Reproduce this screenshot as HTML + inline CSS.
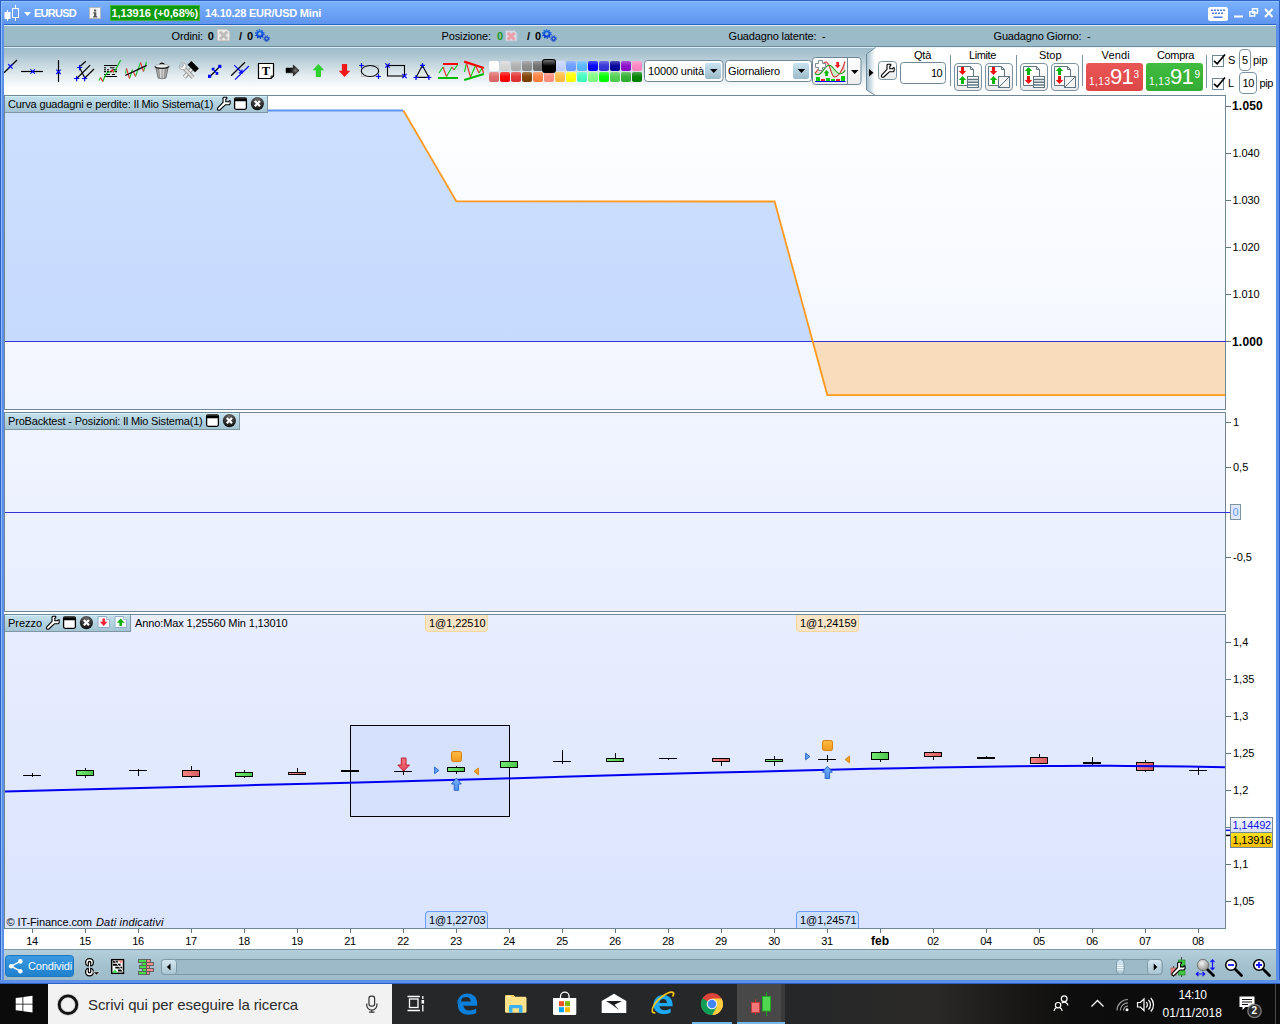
<!DOCTYPE html>
<html lang="it">
<head>
<meta charset="utf-8">
<title>EURUSD</title>
<style>
html,body{margin:0;padding:0;}
body{width:1280px;height:1024px;overflow:hidden;position:relative;background:#fff;font-family:"Liberation Sans",sans-serif;font-size:11px;color:#000;}
.abs{position:absolute;}
#win{position:absolute;left:0;top:0;width:1280px;height:984px;background:#5b8fea;}
#titlebar{position:absolute;left:0;top:0;width:1280px;height:25px;background:linear-gradient(#7ab2ff 0%,#72a8fa 30%,#5e93ec 100%);box-sizing:border-box;border:1px solid #2b62c4;border-bottom:none;}
#titlebar .hl{position:absolute;left:0;top:0;width:1278px;height:1px;background:#8ec0ff;}#titlebar .hl2{position:absolute;left:0;top:0;width:1px;height:24px;background:#8ec0ff;}
#bl{position:absolute;left:0;top:24px;width:4px;height:960px;background:#5b8fea;border-left:1px solid #2b62c4;box-sizing:border-box;}
#bl i{position:absolute;left:0;top:0;width:1px;height:958px;background:#8cbcfc;}
#br{position:absolute;left:1276px;top:24px;width:4px;height:960px;background:#5b8fea;border-right:1px solid #2b62c4;box-sizing:border-box;}
#bb{position:absolute;left:0;top:980px;width:1280px;height:4px;background:#5b8fea;border-bottom:1px solid #2b62c4;box-sizing:border-box;}
#tsep{position:absolute;left:4px;top:24px;width:1272px;height:1px;background:#2b62c4;}
#tsep2{position:absolute;left:4px;top:25px;width:1272px;height:1px;background:#d8eef6;}
#status{position:absolute;left:4px;top:26px;width:1272px;height:20px;background:#9cbbc8;}
#toolbar{position:absolute;left:4px;top:46px;width:1272px;height:49px;background:linear-gradient(#6f8a98 0,#6f8a98 1px,#d6eef8 1px,#d6eef8 2px,#9fbdca 2px,#a9c3cf 8px,#e4edf1 30px,#ffffff 44px);}
#main{position:absolute;left:4px;top:95px;width:1272px;height:854px;background:#fff;}
.panel{position:absolute;left:4px;width:1222px;box-sizing:border-box;border:1px solid #6f8796;}
#p1{top:95px;height:315px;background:linear-gradient(#ffffff,#f1f5ff);}
#p2{top:412px;height:200px;background:linear-gradient(#f1f5ff,#e8eefe);}
#p3{top:614px;height:315px;background:linear-gradient(#e8eefe,#dae4fe);}
.tab{position:absolute;height:17px;background:linear-gradient(#d2f0fa 0,#d2f0fa 1px,#c2e0ec 1px,#a4c4d3 100%);border-right:1px solid #7d97a5;border-bottom:1px solid #7d97a5;box-sizing:border-box;}
.ax{position:absolute;left:1233px;font-size:11px;line-height:12px;white-space:nowrap;}
.tick{position:absolute;left:1226px;width:4px;height:1px;background:#5f7582;}
#bbar{position:absolute;left:4px;top:949px;width:1272px;height:31px;background:linear-gradient(#7f99a6 0,#7f99a6 1px,#b4cfdb 1px,#a2c0ce 60%,#9dbbc9 100%);}
#task{position:absolute;left:0;top:984px;width:1280px;height:40px;background:linear-gradient(to right,#252628 0,#262729 62%,#2a2927 73%,#1a1917 79%,#0d0d0d 84%,#0b0b0b 100%);}

.t{position:absolute;white-space:nowrap;line-height:12px;font-size:11px;}
.b{font-weight:bold;}
.w{color:#fff;}
svg{position:absolute;overflow:visible;}
</style>
</head>
<body>
<div id="win"></div>
<div id="titlebar"><div class="hl"></div><div class="hl2"></div></div>
<div id="tsep"></div><div id="tsep2"></div>
<div id="status"></div>
<div id="toolbar"></div>

<!-- TITLE BAR -->
<svg id="ticon" style="left:0;top:0" width="120" height="25" viewBox="0 0 120 25">
 <rect x="4.5" y="12" width="6" height="7" fill="#fff"/><rect x="7" y="10" width="1" height="11" fill="#fff"/>
 <rect x="12.5" y="8.5" width="6" height="9" fill="none" stroke="#fff" stroke-width="1"/><rect x="15" y="5" width="1" height="3" fill="#fff"/><rect x="15" y="18" width="1" height="3" fill="#fff"/>
 <path d="M24 12h7l-3.5 4z" fill="#fff"/>
 <rect x="89.500" y="7.500" width="11" height="11" fill="#f4f4f4" stroke="#b0b8c0"/>
 <path d="M94 9.500h2.200v2h-2.200zM93.300 12.300h3v4h1v1.200h-4.200v-1.200h1v-2.800h-0.800z" fill="#555"/>
</svg>
<div class="t b w" style="left:34px;top:7px;letter-spacing:-0.74px;/*a*/--x1:76">EURUSD</div>
<div class="abs" style="left:110px;top:5px;width:90px;height:16px;background:#0d9a0d;border:1px solid #3fb53f;box-sizing:border-box"></div>
<div class="t b w" style="left:111.500px;top:7px;letter-spacing:-0.08px;/*a*/--x1:198">1,13916 (+0,68%)</div>
<div class="t b w" style="left:205px;top:7px;letter-spacing:-0.21px;/*a*/--x1:321">14.10.28 EUR/USD Mini</div>
<svg id="wctl" style="left:1200px;top:0" width="76" height="25" viewBox="0 0 76 25">
 <rect x="8" y="7" width="20" height="14" rx="2.500" fill="#fff"/>
 <g fill="#4a7fe0"><rect x="11" y="9.500" width="2" height="1.500"/><rect x="14" y="9.500" width="2" height="1.500"/><rect x="17" y="9.500" width="2" height="1.500"/><rect x="20" y="9.500" width="2" height="1.500"/><rect x="23" y="9.500" width="2" height="1.500"/>
 <rect x="12" y="12.500" width="2" height="1.500"/><rect x="15" y="12.500" width="2" height="1.500"/><rect x="18" y="12.500" width="2" height="1.500"/><rect x="21" y="12.500" width="2" height="1.500"/><rect x="13.500" y="16.500" width="9" height="1.500"/></g>
 <rect x="34" y="15.500" width="9" height="2" fill="#fff"/>
 <path d="M52.500 8.800h5v4.200h-5z M49.700 11.800h5v4.200h-5z" fill="none" stroke="#fff" stroke-width="1.400"/>
 <path d="M65 9l7.500 8M72.500 9l-7.500 8" stroke="#fff" stroke-width="2" fill="none"/>
</svg>
<!-- STATUS BAND -->
<div class="t" style="left:171.500px;top:30px;letter-spacing:-0.13px;/*a*/--x1:203">Ordini:</div>
<div class="t b" style="left:207.700px;top:30px">0</div>
<div class="t b" style="left:239px;top:30px">/</div><div class="t b" style="left:247px;top:30px">0</div>
<div class="t" style="left:441.500px;top:30px;letter-spacing:-0.13px;/*a*/--x1:491">Posizione:</div>
<div class="t b" style="left:497px;top:30px;color:#1a9a1a">0</div>
<div class="t b" style="left:527px;top:30px">/</div><div class="t b" style="left:535px;top:30px">0</div>
<div class="t" style="left:728.500px;top:30px;letter-spacing:-0.15px;/*a*/--x1:816.500">Guadagno latente:</div><div class="t" style="left:822px;top:30px">-</div>
<div class="t" style="left:993.500px;top:30px;letter-spacing:-0.16px;/*a*/--x1:1081.500">Guadagno Giorno:</div><div class="t" style="left:1087px;top:30px">-</div>
<svg id="sticons" style="left:0;top:26px" width="600" height="20" viewBox="0 26 600 20">
 <defs><linearGradient id="gearg" gradientUnits="userSpaceOnUse" x1="0" y1="28" x2="0" y2="43"><stop offset="0" stop-color="#2a86ec"/><stop offset=".5" stop-color="#0a44d8"/><stop offset="1" stop-color="#0630c0"/></linearGradient></defs>
 <g id="doc1"><path d="M217.500 29.500h9.500l2.500 2.500v8.500h-12z" fill="#ecebe8" stroke="#cfc8c4" stroke-width="1"/><path d="M220 31.800l7.300 7.300M227.300 31.800l-7.300 7.300" stroke="#bebebc" stroke-width="3"/></g>
 <g id="doc2"><path d="M505.500 30.500h9l2.500 2.500v8h-11.500z" fill="#d6dde6" stroke="#b4c4d6" stroke-width="1"/><path d="M507.800 32.800l6.800 6.800M514.600 32.800l-6.800 6.800" stroke="#eaa0aa" stroke-width="3.200"/></g>
 <g id="gear1" fill="none" stroke="url(#gearg)"><circle cx="259.8" cy="33.9" r="2.7" stroke-width="2.0"/><circle cx="259.8" cy="33.9" r="4.2" stroke-width="1.4" stroke-dasharray="1.319 1.319"/><circle cx="266.6" cy="38.6" r="1.7" stroke-width="1.3"/><circle cx="266.6" cy="38.6" r="2.8" stroke-width="1.0" stroke-dasharray="1.100 1.100"/></g>
 <g id="gear2" fill="none" stroke="url(#gearg)"><circle cx="546.8" cy="33.9" r="2.7" stroke-width="2.0"/><circle cx="546.8" cy="33.9" r="4.2" stroke-width="1.4" stroke-dasharray="1.319 1.319"/><circle cx="553.6" cy="38.6" r="1.7" stroke-width="1.3"/><circle cx="553.6" cy="38.6" r="2.8" stroke-width="1.0" stroke-dasharray="1.100 1.100"/></g>
</svg>

<!-- TOOLBAR -->
<svg id="tbsvg" style="left:0;top:46px" width="1280" height="50" viewBox="0 46 1280 50">
<defs>
<linearGradient id="gloss" x1="0" y1="0" x2="0" y2="1"><stop offset="0" stop-color="#fff" stop-opacity=".3"/><stop offset=".45" stop-color="#fff" stop-opacity=".04"/><stop offset="1" stop-color="#000" stop-opacity=".03"/></linearGradient>
<linearGradient id="gloss2" x1="0" y1="0" x2="0" y2="1"><stop offset="0" stop-color="#fff" stop-opacity=".45"/><stop offset="1" stop-color="#fff" stop-opacity="0"/></linearGradient>
<linearGradient id="btng" x1="0" y1="0" x2="0" y2="1"><stop offset="0" stop-color="#ffffff"/><stop offset="1" stop-color="#ececec"/></linearGradient>
<linearGradient id="ddg" x1="0" y1="0" x2="0" y2="1"><stop offset="0" stop-color="#c9e2f0"/><stop offset="1" stop-color="#9bbac9"/></linearGradient>
<linearGradient id="rsec" x1="0" y1="0" x2="1" y2="0"><stop offset="0" stop-color="#9bbac9"/><stop offset="1" stop-color="#ffffff"/></linearGradient>
<linearGradient id="redg" x1="0" y1="0" x2="0" y2="1"><stop offset="0" stop-color="#ea5656"/><stop offset="1" stop-color="#dc4646"/></linearGradient>
<linearGradient id="grng" x1="0" y1="0" x2="0" y2="1"><stop offset="0" stop-color="#40bc40"/><stop offset="1" stop-color="#32ac32"/></linearGradient>
<linearGradient id="trashg" x1="0" y1="0" x2="1" y2="0"><stop offset="0" stop-color="#8a8a8a"/><stop offset=".45" stop-color="#e8e8e8"/><stop offset="1" stop-color="#8a8a8a"/></linearGradient>
<radialGradient id="arrg" gradientUnits="userSpaceOnUse" cx="295.500" cy="70.500" r="7"><stop offset="0" stop-color="#7a7a7a"/><stop offset=".55" stop-color="#222"/><stop offset="1" stop-color="#000"/></radialGradient>
</defs>
<!-- right white section -->
<path d="M875 47.500L1276 47.500V95H875L866.500 90V54Z" fill="#fff"/>
<path d="M875 48L867 54V90L875 95Z" fill="url(#rsec)"/>
<rect x="866" y="54" width="9" height="36" fill="url(#rsec)"/>
<path d="M875.500 47.500L866.500 54V90L875.500 95.500" fill="none" stroke="#6f8a98" stroke-width="1"/>
<path d="M869 69l4.500 3.800L869 76.500z" fill="#000"/>
<!-- drawing icons -->
<g id="ic1"><path d="M4 72.700L17 60" stroke="#000" stroke-width="1.200"/><path d="M8.200 64.200l4.400 4.400M12.600 64.200l-4.400 4.400" stroke="#00f" stroke-width="1.200"/></g>
<g id="ic2"><path d="M21 71.500H43" stroke="#000" stroke-width="1.200"/><path d="M30.500 69.300l4.400 4.400M34.900 69.300l-4.400 4.400" stroke="#00f" stroke-width="1.200"/></g>
<g id="ic3"><path d="M58.500 60V82" stroke="#000" stroke-width="1.200"/><path d="M56.300 69.600l4.400 4.400M60.700 69.600l-4.400 4.400" stroke="#00f" stroke-width="1.200"/></g>
<g id="ic4" stroke="#000" stroke-width="1.200"><path d="M80.200 66.300L85.800 61.300M77.300 78L90.200 65.100M84.900 78L94 69M79.600 67.800L84.900 78"/><path d="M77 67.500h5.200M79.600 65v5.200M74 78.500h5.200M76.600 76v5.200M82 78.500h5.200M84.600 76v5.200" stroke="#00f"/></g>
<g id="ic5"><path d="M104 65.500h13M104 76.500h13" stroke="#000" stroke-width="1.200"/><path d="M104 67.700h2M110 67.700h4.500M104 69.700h2M107 69.700h2M112.500 69.700h4.500M104 71.600h2M107 71.600h2M110 71.600h2M115 71.600h2M104 74.500h6M112 74.500h3" stroke="#000" stroke-width="1.100"/><path d="M99 80.500l1.500-3M102.800 81.500l2.200-5.500 2-3 3.500-1.500M113.500 72.500l3-4.500 4.200-8" stroke="#10c020" stroke-width="1.200" fill="none"/><path d="M100.500 77.500l2.300 4M110.500 71.500l2-1.500 1 2.500" stroke="#f01818" stroke-width="1.200" fill="none"/></g>
<g id="ic6" fill="none" stroke-width="1.100"><path d="M125.500 73.500l1-5M129.500 78.500l3-9M135.500 76.500l5-14M143.500 71.500l3-9.500" stroke="#20c030"/><path d="M126.500 68.500l3 10M133.500 72l2 4.500M140.500 62.500l3 9" stroke="#f03030"/><path d="M125.300 75.500L146.700 65.300" stroke="#000" stroke-width="1.300"/></g>
<g id="ic7"><path d="M156 68l2 10q4 1.600 8 0l2-10z" fill="url(#trashg)" stroke="#6a6a6a" stroke-width=".8"/><path d="M158.600 69l.9 9M162 69.300v9.300M165.400 69l-.9 9" stroke="#8a8a8a" stroke-width="1"/><path d="M159.500 64.800q2.500-3.200 5 0" fill="none" stroke="#000" stroke-width="1.500"/><ellipse cx="162" cy="66.300" rx="7" ry="2" fill="#ececec"/><path d="M155 66.300a7 2 0 0 0 14 0" fill="none" stroke="#1a1a1a" stroke-width="1.300"/><path d="M155 66.300a7 2 0 0 1 14 0" fill="none" stroke="#999" stroke-width=".6"/></g>
<g id="ic8"><path d="M184.300 77.300l8-9" stroke="#8c8c8c" stroke-width="4" stroke-linecap="butt"/><path d="M184.300 77.300l8-9" stroke="#f2f2f2" stroke-width="2.400"/><rect x="-5.300" y="-2.700" width="10.600" height="5.400" fill="#000" transform="translate(193.200,66.600) rotate(45)"/><path d="M184.500 68.500l8.500 9" stroke="#8c8c8c" stroke-width="4"/><path d="M184.500 68.500l8.500 9" stroke="#dedede" stroke-width="2.400"/><circle cx="182.800" cy="66.300" r="3.500" fill="#f6f6f6" stroke="#9a9a9a" stroke-width=".8"/><path d="M179 62l3.500 1.300 1.200 2.300-1.700 1.700-2.300-1.200z" fill="#b8ccd7"/><path d="M182.300 63.500a1.900 1.900 0 1 1-2.500 2.600" fill="none" stroke="#9a9a9a" stroke-width=".7"/></g>
<g id="ic9"><path d="M210.500 76L219.800 66.500" stroke="#000" stroke-width="1.200"/><rect x="208" y="74.700" width="3.200" height="3.200" fill="#00f"/><rect x="218.200" y="64.800" width="3.200" height="3.200" fill="#00f"/><path d="M212.500 68.500l5 5.500M212.300 70.500v-2.200h2.200M217.700 72v2.200h-2.200" stroke="#00f" stroke-width="1.200" fill="none"/></g>
<g id="ic10" fill="none"><path d="M231.100 75.700L245 62.200" stroke="#000" stroke-width="1.200"/><path d="M235 79.600L249 66" stroke="#00f" stroke-width="1.200"/><path d="M234.200 65.100L242 72.700M242 69.500v3.300h-3.300" stroke="#00f" stroke-width="1.200"/></g>
<g id="ic11"><path d="M258.500 63.500h15v12.500l-2.500 2.500h-12.500z" fill="#fff" stroke="#000" stroke-width="1.200"/><path d="M273.500 76h-2.500v2.500" fill="none" stroke="#000" stroke-width=".8"/></g>
<g id="ic12"><path d="M286 68h7.300v-3l5.800 5.500-5.800 5.500v-3.200H286z" fill="url(#arrg)" stroke="#000" stroke-width=".5"/></g>
<g id="ic13"><path d="M318.400 64l5.800 6.300h-3.200v6.700h-5.200v-6.700h-3.200z" fill="#2fd02f"/></g>
<g id="ic14"><path d="M341.900 64h5.200v6.700h3.200l-5.800 6.300-5.800-6.300h3.200z" fill="#f01818"/></g>
<g id="ic15" fill="none"><rect x="361.500" y="65.500" width="17" height="11" stroke="#aaa" stroke-width=".6"/><ellipse cx="370" cy="71" rx="8.700" ry="5.500" stroke="#000" stroke-width="1.100"/><path d="M359 65.500h5M361.500 63v5M376 76.500h5M378.500 74v5" stroke="#00f" stroke-width="1.200"/></g>
<g id="ic16" fill="none"><rect x="387.500" y="65.500" width="17" height="10.500" stroke="#000" stroke-width="1.100"/><path d="M385.300 63.300l4.400 4.400M389.700 63.300l-4.400 4.400M402.300 73.800l4.400 4.400M406.700 73.800l-4.400 4.400" stroke="#00f" stroke-width="1.200"/></g>
<g id="ic17" fill="none"><path d="M422.400 65.400L416 77.400H428.900Z" stroke="#000" stroke-width="1.100"/><path d="M420 65.400h5M422.500 63v5M413.500 77.500h5M416 75v5M426.400 77.500h5M428.900 75v5" stroke="#00f" stroke-width="1.200"/></g>
<g id="ic18" fill="none"><path d="M443 64h15" stroke="#f00" stroke-width="2"/><path d="M438 78h20" stroke="#0b0" stroke-width="2"/><path d="M439 73l4-6M446.500 76.500l5.500-9.500M454 70l3.500-5" stroke="#0c0" stroke-width="1.100"/><path d="M443 67l3.500 9.500M452 67l2 3" stroke="#f22" stroke-width="1.100"/></g>
<g id="ic19" fill="none"><path d="M464.200 61.600L483.900 68" stroke="#f00" stroke-width="2.200"/><path d="M464.200 80L483.900 74" stroke="#0b0" stroke-width="2.200"/><path d="M464.500 72l2-9M470.500 77l5-11.500M479 73l3-5" stroke="#0c0" stroke-width="1.100"/><path d="M466.500 63l4 14M475.500 65.500l3.500 7.500M482 68l1.500 5" stroke="#f22" stroke-width="1.100"/></g>
<!-- swatches -->
<rect x="489" y="61" width="10" height="10" rx="2" fill="#ffffff"/><rect x="500" y="61" width="10" height="10" rx="2" fill="#d6d6d6"/><rect x="511" y="61" width="10" height="10" rx="2" fill="#b0b0b0"/><rect x="522" y="61" width="10" height="10" rx="2" fill="#8c8c8c"/><rect x="533" y="61" width="10" height="10" rx="2" fill="#6e6e6e"/><rect x="555" y="61" width="10" height="10" rx="2" fill="#c3d1ff"/><rect x="566" y="61" width="10" height="10" rx="2" fill="#6a9cff"/><rect x="577" y="61" width="10" height="10" rx="2" fill="#58b8ff"/><rect x="588" y="61" width="10" height="10" rx="2" fill="#0000ff"/><rect x="599" y="61" width="10" height="10" rx="2" fill="#3333d6"/><rect x="610" y="61" width="10" height="10" rx="2" fill="#000099"/><rect x="621" y="61" width="10" height="10" rx="2" fill="#8a0ac8"/><rect x="632" y="61" width="10" height="10" rx="2" fill="#ff84c2"/><rect x="489" y="72" width="10" height="10" rx="2" fill="#e06868"/><rect x="500" y="72" width="10" height="10" rx="2" fill="#ff0000"/><rect x="511" y="72" width="10" height="10" rx="2" fill="#e23232"/><rect x="522" y="72" width="10" height="10" rx="2" fill="#804000"/><rect x="533" y="72" width="10" height="10" rx="2" fill="#ff8040"/><rect x="544" y="72" width="10" height="10" rx="2" fill="#ff9080"/><rect x="555" y="72" width="10" height="10" rx="2" fill="#ffbe40"/><rect x="566" y="72" width="10" height="10" rx="2" fill="#ffff00"/><rect x="577" y="72" width="10" height="10" rx="2" fill="#40ffc0"/><rect x="588" y="72" width="10" height="10" rx="2" fill="#80ff80"/><rect x="599" y="72" width="10" height="10" rx="2" fill="#00ff00"/><rect x="610" y="72" width="10" height="10" rx="2" fill="#50d050"/><rect x="621" y="72" width="10" height="10" rx="2" fill="#30b030"/><rect x="632" y="72" width="10" height="10" rx="2" fill="#008000"/><g fill="url(#gloss)"><rect x="489" y="61" width="10" height="10" rx="2"/><rect x="489" y="72" width="10" height="10" rx="2"/><rect x="500" y="61" width="10" height="10" rx="2"/><rect x="500" y="72" width="10" height="10" rx="2"/><rect x="511" y="61" width="10" height="10" rx="2"/><rect x="511" y="72" width="10" height="10" rx="2"/><rect x="522" y="61" width="10" height="10" rx="2"/><rect x="522" y="72" width="10" height="10" rx="2"/><rect x="533" y="61" width="10" height="10" rx="2"/><rect x="533" y="72" width="10" height="10" rx="2"/><rect x="544" y="72" width="10" height="10" rx="2"/><rect x="555" y="61" width="10" height="10" rx="2"/><rect x="555" y="72" width="10" height="10" rx="2"/><rect x="566" y="61" width="10" height="10" rx="2"/><rect x="566" y="72" width="10" height="10" rx="2"/><rect x="577" y="61" width="10" height="10" rx="2"/><rect x="577" y="72" width="10" height="10" rx="2"/><rect x="588" y="61" width="10" height="10" rx="2"/><rect x="588" y="72" width="10" height="10" rx="2"/><rect x="599" y="61" width="10" height="10" rx="2"/><rect x="599" y="72" width="10" height="10" rx="2"/><rect x="610" y="61" width="10" height="10" rx="2"/><rect x="610" y="72" width="10" height="10" rx="2"/><rect x="621" y="61" width="10" height="10" rx="2"/><rect x="621" y="72" width="10" height="10" rx="2"/><rect x="632" y="61" width="10" height="10" rx="2"/><rect x="632" y="72" width="10" height="10" rx="2"/></g><rect x="542" y="59" width="14" height="14" rx="3" fill="#000"/><rect x="543" y="60" width="12" height="6" rx="2" fill="url(#gloss2)"/>
<!-- combos -->
<rect x="644.500" y="60.500" width="78.500" height="21" rx="3" fill="#fff" stroke="#6f8796"/>
<rect x="705" y="63" width="16" height="16" rx="2" fill="url(#ddg)"/>
<path d="M710 69h7.500l-3.750 4z" fill="#000"/>
<rect x="725.500" y="60.500" width="86" height="21" rx="3" fill="#fff" stroke="#6f8796"/>
<rect x="793" y="63" width="16" height="16" rx="2" fill="url(#ddg)"/>
<path d="M797.700 69h7.500l-3.750 4z" fill="#000"/>
<!-- indicator button -->
<rect x="812.500" y="57.500" width="48.500" height="27" rx="3" fill="url(#btng)" stroke="#6f8796"/>
<path d="M847.500 58v26" stroke="#6f8796"/>
<path d="M851 70h7.500l-3.750 4z" fill="#000"/>
<g id="indic"><path d="M815 73C818 71 822 62 826 62C830 62 831 77 834.500 77C838 77 843 70 845 61.500L845 70C844.500 71.500 842.500 73.800 840 73.800C836 73.800 833 65.200 829.500 65.200C826 65.200 824 70 821 73C819 75 817 75.500 815 73.500Z" fill="#f8c4c4" fill-opacity=".7" fill-rule="evenodd"/><path d="M827.500 65.500C831 65 834 71 837.500 72.500C836 76 835.500 77 834.500 77C831.500 77 830.500 68 827.500 65.500Z" fill="#c4f0c4"/><path d="M815 73C818 71 822 62 826 62C830 62 831 77 834.500 77C838 77 843 70 845 61.500" fill="none" stroke="#cc3030" stroke-width="1.100"/><path d="M815 73.500C817 75.500 819 75 821 73C824 70 826 65.200 829.500 65.200C833 65.200 836 73.800 840 73.800C842.500 73.800 844.500 71.500 845 70" fill="none" stroke="#18a018" stroke-width="1.100"/><path d="M815.500 63.500h3v-3h4v3h3v4h-3v3h-4v-3h-3z" fill="#fff" stroke="#7c8e9a" stroke-width="1"/><path d="M826.500 70l-2.800 3.200h1.500v2.700h2.600v-2.700h1.500z" fill="#0b0"/><path d="M836.300 62h2.700v3h1.500l-2.850 3.200l-2.850-3.200h1.500z" fill="#f02020"/><rect x="816" y="77" width="4" height="4" fill="#0c0"/><rect x="821" y="79" width="4" height="2" fill="#e22"/><rect x="826" y="78" width="4" height="3" fill="#0c0"/><rect x="831" y="79" width="4" height="2" fill="#0c0"/><rect x="836" y="79" width="4" height="2" fill="#e22"/><rect x="841" y="76" width="4" height="5" fill="#0c0"/><path d="M815 81.500h30.500" stroke="#00f" stroke-width="1"/></g>
<!-- wrench btn -->
<rect x="878.500" y="61.500" width="18" height="18" rx="3" fill="url(#btng)" stroke="#7c94a2"/>
<path id="wr" transform="translate(881,64)" d="M.8 10.800L6 5.400V1L7 .300H9.800V1.500L8.800 2.200V4.800H11.600L12.200 3.800H13.200V6.600L12.200 7.800H8.400L2.800 13Q1.400 13.600 .6 12.600Q0 11.600 .8 10.800Z" fill="#fff" stroke="#000" stroke-width="1.100" stroke-linejoin="round"/>
<!-- qty -->
<rect x="900.500" y="62.500" width="45" height="21" rx="3" fill="#fff" stroke="#6f8796"/>
<path d="M950.500 55v31M1016.500 55v31M1082.500 55v31M1206.500 55v33" stroke="#7c94a2"/>
<!-- order buttons -->
<g id="ob">
<rect x="954.500" y="63.500" width="27" height="27" rx="3.500" fill="url(#btng)" stroke="#7c94a2"/>
<rect x="985.500" y="63.500" width="27" height="27" rx="3.500" fill="url(#btng)" stroke="#7c94a2"/>
<rect x="1020.500" y="63.500" width="27" height="27" rx="3.500" fill="url(#btng)" stroke="#7c94a2"/>
<rect x="1051.500" y="63.500" width="27" height="27" rx="3.500" fill="url(#btng)" stroke="#7c94a2"/>
<g transform="translate(0,0)"><path d="M957.500 66.500h13l3 3v16h-16z" fill="#fff" stroke="#5f7582" stroke-width="1"/><path d="M970.500 66.500v3h3" fill="none" stroke="#5f7582" stroke-width="1"/><path d="M961 67h3v4h2.200l-3.700 4-3.700-4h2.200z" fill="#f01010"/><path d="M962.500 76l3.700 4h-2.200v4h-3v-4h-2.200z" fill="#0ab40a"/><rect x="967.500" y="76.500" width="11" height="11" fill="#fff" stroke="#5f7582" stroke-width="1"/><path d="M968 79.500h10M968 82.200h10M968 85h10" stroke="#5f7582" stroke-width="1.400"/></g><g transform="translate(31,0)"><path d="M957.500 66.500h13l3 3v16h-16z" fill="#fff" stroke="#5f7582" stroke-width="1"/><path d="M970.500 66.500v3h3" fill="none" stroke="#5f7582" stroke-width="1"/><path d="M961 67h3v4h2.200l-3.700 4-3.700-4h2.200z" fill="#f01010"/><path d="M962.500 76l3.700 4h-2.200v4h-3v-4h-2.200z" fill="#0ab40a"/><rect x="967.500" y="76.500" width="11" height="11" fill="#f4f4f4" stroke="#5f7582" stroke-width="1"/><path d="M968 87l10-10" stroke="#5f7582" stroke-width="1"/></g><g transform="translate(66,0)"><path d="M957.500 66.500h13l3 3v16h-16z" fill="#fff" stroke="#5f7582" stroke-width="1"/><path d="M970.500 66.500v3h3" fill="none" stroke="#5f7582" stroke-width="1"/><path d="M962.500 67l3.700 4h-2.200v4h-3v-4h-2.200z" fill="#0ab40a"/><path d="M961 76h3v4h2.200l-3.700 4-3.700-4h2.200z" fill="#f01010"/><rect x="967.500" y="76.500" width="11" height="11" fill="#fff" stroke="#5f7582" stroke-width="1"/><path d="M968 79.500h10M968 82.200h10M968 85h10" stroke="#5f7582" stroke-width="1.400"/></g><g transform="translate(97,0)"><path d="M957.500 66.500h13l3 3v16h-16z" fill="#fff" stroke="#5f7582" stroke-width="1"/><path d="M970.500 66.500v3h3" fill="none" stroke="#5f7582" stroke-width="1"/><path d="M962.500 67l3.700 4h-2.200v4h-3v-4h-2.200z" fill="#0ab40a"/><path d="M961 76h3v4h2.200l-3.700 4-3.700-4h2.200z" fill="#f01010"/><rect x="967.500" y="76.500" width="11" height="11" fill="#f4f4f4" stroke="#5f7582" stroke-width="1"/><path d="M968 87l10-10" stroke="#5f7582" stroke-width="1"/></g></g>
<!-- sell / buy -->
<rect x="1086" y="63" width="57" height="28" rx="3" fill="url(#redg)"/>
<rect x="1146" y="63" width="57" height="28" rx="3" fill="url(#grng)"/>
<!-- checkboxes -->
<rect x="1212.500" y="55.500" width="11" height="11" fill="#fff" stroke="#6f8796"/>
<rect x="1212.500" y="78.500" width="11" height="11" fill="#fff" stroke="#6f8796"/>
<path d="M1214 60.800l3.200 3L1225 54.500" fill="none" stroke="#000" stroke-width="1.700"/>
<path d="M1214 83.800l3.200 3L1225 77.500" fill="none" stroke="#000" stroke-width="1.700"/>
<rect x="1239.500" y="49.500" width="11" height="21" rx="3.500" fill="#fff" stroke="#7c94a2"/>
<rect x="1239.500" y="72.500" width="17" height="21" rx="3.500" fill="#fff" stroke="#7c94a2"/>
</svg>
<div class="t" style="left:261.800px;top:63.600px;font-family:'Liberation Serif',serif;font-weight:bold;font-size:12.500px;line-height:14px;">T</div>
<div class="t" style="left:648px;top:65px;letter-spacing:-0.14px;/*a*/--x1:704">10000 unità</div>
<div class="t" style="left:728px;top:65px;letter-spacing:-0.16px;/*a*/--x1:780">Giornaliero</div>
<div class="t" style="left:914px;top:49px;letter-spacing:-0.24px;/*a*/--x1:931">Qtà</div>
<div class="t" style="left:931px;top:67px;letter-spacing:-0.62px;/*a*/--x1:942">10</div>
<div class="t" style="left:969px;top:49px;letter-spacing:-0.39px;/*a*/--x1:996">Limite</div>
<div class="t" style="left:1039px;top:49px;letter-spacing:-0.04px;/*a*/--x1:1061.500">Stop</div>
<div class="t" style="left:1101.500px;top:49px;letter-spacing:0.19px;/*a*/--x1:1130">Vendi</div>
<div class="t" style="left:1157px;top:49px;letter-spacing:-0.35px;/*a*/--x1:1194">Compra</div>
<div class="t w" style="left:1089px;top:75.500px;font-size:10px;letter-spacing:0.51px;/*a*/--x1:1110.500">1,13</div>
<div class="t w" style="left:1110px;top:65px;font-size:22px;line-height:24px;letter-spacing:-0.74px;/*a*/--x1:1133">91</div>
<div class="t w" style="left:1133.500px;top:68.500px;font-size:10px;letter-spacing:0.94px;/*a*/--x1:1140">3</div>
<div class="t w" style="left:1149px;top:75.500px;font-size:10px;letter-spacing:0.51px;/*a*/--x1:1170.500">1,13</div>
<div class="t w" style="left:1170px;top:65px;font-size:22px;line-height:24px;letter-spacing:-0.74px;/*a*/--x1:1193">91</div>
<div class="t w" style="left:1194.500px;top:68.500px;font-size:10px;letter-spacing:0.94px;/*a*/--x1:1201">9</div>
<div class="t" style="left:1228px;top:54px;letter-spacing:-0.34px;/*a*/--x1:1235">S</div>
<div class="t" style="left:1242px;top:54px;letter-spacing:0.38px;/*a*/--x1:1248.500">5</div>
<div class="t" style="left:1253px;top:54px;letter-spacing:-0.06px;/*a*/--x1:1267.500">pip</div>
<div class="t" style="left:1228px;top:77px;letter-spacing:-0.12px;/*a*/--x1:1234">L</div>
<div class="t" style="left:1242.500px;top:77px;letter-spacing:-0.38px;/*a*/--x1:1254">10</div>
<div class="t" style="left:1259.500px;top:77px;letter-spacing:-0.40px;/*a*/--x1:1273">pip</div>
<div id="main"></div>
<div id="p1" class="panel"></div>
<div id="p2" class="panel"></div>
<div id="p3" class="panel"></div>

<!-- CHARTS -->
<svg id="charts" style="left:0;top:95px" width="1280" height="855" viewBox="0 95 1280 855">
<defs>
<linearGradient id="axb" x1="0" y1="0" x2="0" y2="1"><stop offset="0" stop-color="#f6f9ff"/><stop offset="1" stop-color="#d6def2"/></linearGradient><linearGradient id="axy" x1="0" y1="0" x2="0" y2="1"><stop offset="0" stop-color="#ffe21c"/><stop offset="1" stop-color="#f6bc00"/></linearGradient><linearGradient id="cg" x1="0" y1="0" x2="1" y2="0"><stop offset="0" stop-color="#74ec74"/><stop offset="1" stop-color="#4cc44c"/></linearGradient>
<linearGradient id="cr" x1="0" y1="0" x2="1" y2="0"><stop offset="0" stop-color="#f48686"/><stop offset="1" stop-color="#d65c5c"/></linearGradient>
<linearGradient id="og" x1="0" y1="0" x2="0" y2="1"><stop offset="0" stop-color="#fcbc44"/><stop offset="1" stop-color="#f09a1c"/></linearGradient>
<linearGradient id="bg" x1="0" y1="0" x2="0" y2="1"><stop offset="0" stop-color="#78b2fa"/><stop offset="1" stop-color="#4a8cec"/></linearGradient>
<linearGradient id="rg" x1="0" y1="0" x2="0" y2="1"><stop offset="0" stop-color="#f47882"/><stop offset="1" stop-color="#e44858"/></linearGradient>
<radialGradient id="clg" cx=".5" cy=".2" r=".8"><stop offset="0" stop-color="#6a6a6a"/><stop offset="1" stop-color="#0c0c0c"/></radialGradient>
<linearGradient id="wing" x1="0" y1="0" x2="0" y2="1"><stop offset="0" stop-color="#555"/><stop offset=".5" stop-color="#000"/><stop offset="1" stop-color="#000"/></linearGradient>
<g id="iw"><path d="M.8 10.800L6 5.400V1L7 .300H9.800V1.500L8.800 2.200V4.800H11.600L12.200 3.800H13.200V6.600L12.200 7.800H8.400L2.800 13Q1.400 13.600 .6 12.600Q0 11.600 .8 10.800Z" fill="#fff" stroke="#000" stroke-width="1.100" stroke-linejoin="round"/></g>
<g id="iwin"><rect x=".6" y=".6" width="11.800" height="11.400" rx="1.500" fill="#fff" stroke="#000" stroke-width="1.300"/><path d="M.2 4V2.100A1.900 1.900 0 0 1 2.100.2h8.800a1.900 1.900 0 0 1 1.900 1.900v1.900z" fill="url(#wing)"/></g>
<g id="icl"><circle cx="6.600" cy="6.600" r="6.600" fill="url(#clg)"/><path d="M4 4l5.200 5.200M9.200 4l-5.200 5.200" stroke="#fff" stroke-width="2.200"/></g>
<g id="idoc"><path d="M.5.500h8.500l3 3v8h-11.500z" fill="#f6f9fd" stroke="#94accc" stroke-width="1"/><path d="M9 .5v3h3" fill="#fff" stroke="#94accc" stroke-width=".8"/></g>
</defs>
<!-- panel 1 -->
<path d="M5 110.500H403.400L456.400 201.400L774.600 201.500L812.600 341H5Z" fill="#3a82fb" fill-opacity=".25"/>
<path d="M812.600 341.500H1225V395.100H827.300Z" fill="#f8dcbc"/>
<rect x="5" y="341" width="1221" height="1" fill="#3232d8"/>
<path d="M5 110.500H403.400" fill="none" stroke="#5f95f2" stroke-width="1.800"/>
<path d="M403.400 110.500L456.400 201.400L774.600 201.500L827.300 395.100H1225" fill="none" stroke="#ff9a1e" stroke-width="1.800" stroke-linejoin="miter"/>
<!-- panel 2 -->
<rect x="5" y="512" width="1225" height="1" fill="#3232d8"/>
<!-- panel 3 -->
<rect x="350.500" y="725.500" width="159" height="91" fill="#d6e1fe" stroke="#000" stroke-width="1"/>
<rect x="23" y="775" width="18" height="1" fill="#000"/><rect x="32" y="773" width="1" height="4" fill="#000"/><rect x="85" y="768" width="1" height="10" fill="#000"/><rect x="76.5" y="770.5" width="17" height="5" fill="url(#cg)" stroke="#000" stroke-width="1"/><rect x="129" y="770" width="18" height="1" fill="#000"/><rect x="138" y="769" width="1" height="7" fill="#000"/><rect x="191" y="766" width="1" height="12" fill="#000"/><rect x="182.5" y="770.5" width="17" height="6" fill="url(#cr)" stroke="#000" stroke-width="1"/><rect x="244" y="770" width="1" height="8" fill="#000"/><rect x="235.5" y="772.5" width="17" height="4" fill="url(#cg)" stroke="#000" stroke-width="1"/><rect x="297" y="768" width="1" height="7" fill="#000"/><rect x="288.5" y="772.5" width="17" height="2" fill="url(#cr)" stroke="#000" stroke-width="1"/><rect x="341" y="770" width="18" height="2" fill="#000"/><rect x="394" y="771" width="18" height="1" fill="#000"/><rect x="403" y="766" width="1" height="9" fill="#000"/><rect x="456" y="766" width="1" height="8" fill="#000"/><rect x="447.5" y="767.5" width="17" height="4" fill="url(#cg)" stroke="#000" stroke-width="1"/><rect x="500.5" y="761.5" width="17" height="6" fill="url(#cg)" stroke="#000" stroke-width="1"/><rect x="553" y="761" width="18" height="1" fill="#000"/><rect x="562" y="750" width="1" height="14" fill="#000"/><rect x="615" y="753" width="1" height="9" fill="#000"/><rect x="606.5" y="758.5" width="17" height="3" fill="url(#cg)" stroke="#000" stroke-width="1"/><rect x="659" y="758" width="18" height="1" fill="#000"/><rect x="668" y="758" width="1" height="2" fill="#000"/><rect x="721" y="758" width="1" height="8" fill="#000"/><rect x="712.5" y="758.5" width="17" height="3" fill="url(#cr)" stroke="#000" stroke-width="1"/><rect x="774" y="756" width="1" height="10" fill="#000"/><rect x="765.5" y="759.5" width="17" height="2" fill="url(#cg)" stroke="#000" stroke-width="1"/><rect x="818" y="759" width="18" height="1" fill="#000"/><rect x="827" y="755" width="1" height="7" fill="#000"/><rect x="880" y="751" width="1" height="11" fill="#000"/><rect x="871.5" y="752.5" width="17" height="7" fill="url(#cg)" stroke="#000" stroke-width="1"/><rect x="933" y="751" width="1" height="9" fill="#000"/><rect x="924.5" y="752.5" width="17" height="4" fill="url(#cr)" stroke="#000" stroke-width="1"/><rect x="977" y="757" width="18" height="2" fill="#000"/><rect x="986" y="756" width="1" height="3" fill="#000"/><rect x="1039" y="754" width="1" height="9" fill="#000"/><rect x="1030.5" y="757.5" width="17" height="6" fill="url(#cr)" stroke="#000" stroke-width="1"/><rect x="1083" y="762" width="18" height="2" fill="#000"/><rect x="1092" y="757" width="1" height="9" fill="#000"/><rect x="1145" y="760" width="1" height="12" fill="#000"/><rect x="1136.5" y="762.5" width="17" height="8" fill="url(#cr)" stroke="#000" stroke-width="1"/><rect x="1189" y="770" width="18" height="1" fill="#000"/><rect x="1198" y="767" width="1" height="8" fill="#000"/>
<path d="M5 791.6C32.5 790.87 114.2 788.63 170 787.2C225.8 785.77 285.8 784.40 340 783C394.2 781.60 445.0 780.20 495 778.8C545.0 777.40 589.2 775.98 640 774.6C690.8 773.22 756.7 771.57 800 770.5C843.3 769.43 866.7 768.87 900 768.2C933.3 767.53 973.3 766.88 1000 766.5C1026.7 766.12 1041.7 766.02 1060 765.9C1078.3 765.78 1093.3 765.75 1110 765.8C1126.7 765.85 1140.8 765.97 1160 766.2C1179.2 766.43 1214.2 767.03 1225 767.2" fill="none" stroke="#0000f0" stroke-width="2"/>
<path d="M401.300 758h4.700v7h3.500l-5.850 6.200l-5.850-6.200h3.500z" fill="url(#rg)" stroke="#c02030" stroke-width="1" stroke-linejoin="miter"/>
<rect x="451.5" y="751.5" width="10" height="10" rx="1.800" fill="url(#og)" stroke="#d8800c" stroke-width="1"/><path d="M434.6 767.1l4.300 3.300l-4.300 3.300z" fill="#62a2f6" stroke="#2c68d0" stroke-width="1" stroke-linejoin="round"/><path d="M478.4 768.1l-4.300 3.300l4.300 3.300z" fill="#f8a828" stroke="#d8800c" stroke-width="1" stroke-linejoin="round"/><path d="M456.4 778.1999999999999l4.900 5.800h-2.700v6.300h-4.400v-6.300h-2.700z" fill="url(#bg)" stroke="#2c68d0" stroke-width="1" stroke-linejoin="miter"/>
<rect x="822.5" y="740.5" width="10" height="10" rx="1.800" fill="url(#og)" stroke="#d8800c" stroke-width="1"/><path d="M805.6 753.2l4.300 3.300l-4.300 3.300z" fill="#62a2f6" stroke="#2c68d0" stroke-width="1" stroke-linejoin="round"/><path d="M849.4 756.2l-4.300 3.300l4.300 3.300z" fill="#f8a828" stroke="#d8800c" stroke-width="1" stroke-linejoin="round"/><path d="M827.4 766.4l4.900 5.800h-2.700v6.300h-4.400v-6.300h-2.700z" fill="url(#bg)" stroke="#2c68d0" stroke-width="1" stroke-linejoin="miter"/>
<!-- redraw ma partially over? no -->
<rect x="32" y="929" width="1" height="4" fill="#5f7582"/><rect x="85" y="929" width="1" height="4" fill="#5f7582"/><rect x="138" y="929" width="1" height="4" fill="#5f7582"/><rect x="191" y="929" width="1" height="4" fill="#5f7582"/><rect x="244" y="929" width="1" height="4" fill="#5f7582"/><rect x="297" y="929" width="1" height="4" fill="#5f7582"/><rect x="350" y="929" width="1" height="4" fill="#5f7582"/><rect x="403" y="929" width="1" height="4" fill="#5f7582"/><rect x="456" y="929" width="1" height="4" fill="#5f7582"/><rect x="509" y="929" width="1" height="4" fill="#5f7582"/><rect x="562" y="929" width="1" height="4" fill="#5f7582"/><rect x="615" y="929" width="1" height="4" fill="#5f7582"/><rect x="668" y="929" width="1" height="4" fill="#5f7582"/><rect x="721" y="929" width="1" height="4" fill="#5f7582"/><rect x="774" y="929" width="1" height="4" fill="#5f7582"/><rect x="827" y="929" width="1" height="4" fill="#5f7582"/><rect x="880" y="929" width="1" height="4" fill="#5f7582"/><rect x="933" y="929" width="1" height="4" fill="#5f7582"/><rect x="986" y="929" width="1" height="4" fill="#5f7582"/><rect x="1039" y="929" width="1" height="4" fill="#5f7582"/><rect x="1092" y="929" width="1" height="4" fill="#5f7582"/><rect x="1145" y="929" width="1" height="4" fill="#5f7582"/><rect x="1198" y="929" width="1" height="4" fill="#5f7582"/>
<!-- axis ticks -->
<g fill="#5f7582">
<rect x="1226" y="106" width="5" height="1"/><rect x="1226" y="153" width="5" height="1"/><rect x="1226" y="200" width="5" height="1"/><rect x="1226" y="247" width="5" height="1"/><rect x="1226" y="294" width="5" height="1"/><rect x="1226" y="341" width="5" height="1"/><rect x="1226" y="422" width="5" height="1"/><rect x="1226" y="467" width="5" height="1"/><rect x="1226" y="557" width="5" height="1"/><rect x="1226" y="642" width="5" height="1"/><rect x="1226" y="679" width="5" height="1"/><rect x="1226" y="716" width="5" height="1"/><rect x="1226" y="753" width="5" height="1"/><rect x="1226" y="790" width="5" height="1"/><rect x="1226" y="864" width="5" height="1"/><rect x="1226" y="901" width="5" height="1"/>
</g>
<rect x="1226" y="827" width="5" height="1" fill="#5f7582"/><rect x="1226" y="829.500" width="5" height="1.600" fill="#1010ff"/><rect x="1226" y="834.600" width="5" height="1.600" fill="#000"/>
<!-- axis boxes -->
<rect x="1230.500" y="504.500" width="10" height="15" fill="#dfe8fb" stroke="#7c94a2"/>
<rect x="1230.500" y="817.500" width="42" height="15" fill="url(#axb)" stroke="#6f8796"/>
<rect x="1230.500" y="832.500" width="42" height="15" fill="url(#axy)" stroke="#6f8796"/>
</svg>
<div class="tab" style="left:5px;top:96px;width:263px"></div>
<div class="tab" style="left:5px;top:413px;width:235px"></div>
<div class="tab" style="left:5px;top:615px;width:126px"></div>
<svg id="tabicons" style="left:0;top:95px" width="300" height="540" viewBox="0 95 300 540">
<!-- tab icons -->
<use href="#iw" x="217" y="97"/><use href="#iwin" x="234" y="97.300"/><use href="#icl" x="250.800" y="97"/>
<use href="#iwin" x="206" y="414.300"/><use href="#icl" x="222.800" y="414"/>
<use href="#iw" x="46" y="616"/><use href="#iwin" x="63" y="616.300"/><use href="#icl" x="79.800" y="616"/>
<use href="#idoc" x="97.500" y="616"/><use href="#idoc" x="114.500" y="616"/>
<path d="M102.500 618.500h2.400v3.200h2.600l-3.800 4.300l-3.800-4.300h2.600z" fill="#f02030"/>
<path d="M120.700 618.500l3.900 4.200h-2.600v3.300h-2.600v-3.300h-2.600z" fill="#10b010"/>
</svg>


<div class="t" style="left:8px;top:98px;letter-spacing:-0.16px;/*a*/--x1:213.500">Curva guadagni e perdite: Il Mio Sistema(1)</div>
<div class="t" style="left:8px;top:415px;letter-spacing:-0.17px;/*a*/--x1:202.500">ProBacktest - Posizioni: Il Mio Sistema(1)</div>
<div class="t" style="left:8px;top:617px;letter-spacing:-0.04px;/*a*/--x1:42">Prezzo</div>
<div class="t" style="left:135px;top:617px;letter-spacing:-0.12px;/*a*/--x1:287.500">Anno:Max 1,25560 Min 1,13010</div>
<div class="abs" style="left:425px;top:615px;width:63px;height:17px;box-sizing:border-box;background:#f8e4c6;border:1px solid #f6d69c;border-top:none;border-radius:0 0 4px 4px"></div>
<div class="abs" style="left:796px;top:615px;width:63px;height:17px;box-sizing:border-box;background:#f8e4c6;border:1px solid #f6d69c;border-top:none;border-radius:0 0 4px 4px"></div>
<div class="abs" style="left:425px;top:911px;width:63px;height:17px;box-sizing:border-box;background:#cddfff;border:1px solid #6a9df5;border-bottom:none;border-radius:4px 4px 0 0"></div>
<div class="abs" style="left:796px;top:911px;width:63px;height:17px;box-sizing:border-box;background:#cddfff;border:1px solid #6a9df5;border-bottom:none;border-radius:4px 4px 0 0"></div>
<div class="t" style="left:429px;top:617px;letter-spacing:-0.06px;/*a*/--x1:485.500">1@1,22510</div>
<div class="t" style="left:800px;top:617px;letter-spacing:-0.06px;/*a*/--x1:856.500">1@1,24159</div>
<div class="t" style="left:429px;top:914px;letter-spacing:-0.06px;/*a*/--x1:485.500">1@1,22703</div>
<div class="t" style="left:800px;top:914px;letter-spacing:-0.06px;/*a*/--x1:856.500">1@1,24571</div>
<div class="t" style="left:6.500px;top:916px;letter-spacing:-0.10px;/*a*/--x1:91.800">© IT-Finance.com</div>
<div class="t" style="left:96px;top:916px;font-style:italic;letter-spacing:0.18px;/*a*/--x1:163.500">Dati indicativi</div>
<div class="ax b" style="font-size:12px;left:1232px;top:100px;letter-spacing:0.19px;/*a*/--x1:1263">1.050</div>
<div class="ax" style="left:1232.500px;top:147px;letter-spacing:-0.11px;/*a*/--x1:1259.500">1.040</div>
<div class="ax" style="left:1232.500px;top:194px;letter-spacing:-0.11px;/*a*/--x1:1259.500">1.030</div>
<div class="ax" style="left:1232.500px;top:241px;letter-spacing:-0.11px;/*a*/--x1:1259.500">1.020</div>
<div class="ax" style="left:1232.500px;top:288px;letter-spacing:-0.11px;/*a*/--x1:1259.500">1.010</div>
<div class="ax b" style="font-size:12px;left:1232px;top:336px;letter-spacing:0.19px;/*a*/--x1:1263">1.000</div>
<div class="ax" style="top:416px">1</div>
<div class="ax" style="top:461px">0,5</div>
<div class="ax" style="top:551px">-0,5</div>
<div class="ax" style="top:636px">1,4</div>
<div class="ax" style="top:673px">1,35</div>
<div class="ax" style="top:710px">1,3</div>
<div class="ax" style="top:747px">1,25</div>
<div class="ax" style="top:784px">1,2</div>
<div class="ax" style="top:858px">1,1</div>
<div class="ax" style="top:895px">1,05</div>
<div class="ax" style="left:1232.500px;top:506px;color:#6a9df5">0</div>
<div class="ax" style="left:1232.500px;top:819px;color:#1414e6;letter-spacing:-0.18px;/*a*/--x1:1271">1,14492</div>
<div class="ax" style="left:1232.500px;top:833.500px;letter-spacing:-0.18px;/*a*/--x1:1271">1,13916</div>
<div class="t" style="left:11.5px;width:41px;text-align:center;top:935px;letter-spacing:-0.3px">14</div><div class="t" style="left:64.5px;width:41px;text-align:center;top:935px;letter-spacing:-0.3px">15</div><div class="t" style="left:117.5px;width:41px;text-align:center;top:935px;letter-spacing:-0.3px">16</div><div class="t" style="left:170.5px;width:41px;text-align:center;top:935px;letter-spacing:-0.3px">17</div><div class="t" style="left:223.5px;width:41px;text-align:center;top:935px;letter-spacing:-0.3px">18</div><div class="t" style="left:276.5px;width:41px;text-align:center;top:935px;letter-spacing:-0.3px">19</div><div class="t" style="left:329.5px;width:41px;text-align:center;top:935px;letter-spacing:-0.3px">21</div><div class="t" style="left:382.5px;width:41px;text-align:center;top:935px;letter-spacing:-0.3px">22</div><div class="t" style="left:435.5px;width:41px;text-align:center;top:935px;letter-spacing:-0.3px">23</div><div class="t" style="left:488.5px;width:41px;text-align:center;top:935px;letter-spacing:-0.3px">24</div><div class="t" style="left:541.5px;width:41px;text-align:center;top:935px;letter-spacing:-0.3px">25</div><div class="t" style="left:594.5px;width:41px;text-align:center;top:935px;letter-spacing:-0.3px">26</div><div class="t" style="left:647.5px;width:41px;text-align:center;top:935px;letter-spacing:-0.3px">28</div><div class="t" style="left:700.5px;width:41px;text-align:center;top:935px;letter-spacing:-0.3px">29</div><div class="t" style="left:753.5px;width:41px;text-align:center;top:935px;letter-spacing:-0.3px">30</div><div class="t" style="left:806.5px;width:41px;text-align:center;top:935px;letter-spacing:-0.3px">31</div><div class="t b" style="left:859.5px;width:41px;text-align:center;top:935px;font-size:12px">feb</div><div class="t" style="left:912.5px;width:41px;text-align:center;top:935px;letter-spacing:-0.3px">02</div><div class="t" style="left:965.5px;width:41px;text-align:center;top:935px;letter-spacing:-0.3px">04</div><div class="t" style="left:1018.5px;width:41px;text-align:center;top:935px;letter-spacing:-0.3px">05</div><div class="t" style="left:1071.5px;width:41px;text-align:center;top:935px;letter-spacing:-0.3px">06</div><div class="t" style="left:1124.5px;width:41px;text-align:center;top:935px;letter-spacing:-0.3px">07</div><div class="t" style="left:1177.5px;width:41px;text-align:center;top:935px;letter-spacing:-0.3px">08</div>
<div id="bbar"></div>
<!-- BOTTOM BAR -->
<svg id="bbsvg" style="left:0;top:949px" width="1280" height="32" viewBox="0 949 1280 32">
<defs>
<linearGradient id="cvg" x1="0" y1="0" x2="0" y2="1"><stop offset="0" stop-color="#3c9ae2"/><stop offset="1" stop-color="#1f80cc"/></linearGradient>
<linearGradient id="sbb" x1="0" y1="0" x2="0" y2="1"><stop offset="0" stop-color="#d6e8f2"/><stop offset="1" stop-color="#a6c4d2"/></linearGradient>
<radialGradient id="lens" cx=".4" cy=".35" r=".7"><stop offset="0" stop-color="#f4f4f4"/><stop offset="1" stop-color="#8c8c8c"/></radialGradient>
</defs>
<rect x="5.500" y="955.500" width="68" height="21" rx="3" fill="url(#cvg)" stroke="#1c78c4"/>
<g stroke="#fff" stroke-width="1.400" fill="#fff"><path d="M20.300 961.400L11.200 966.200L20.300 971.200" fill="none"/><circle cx="20.300" cy="961.400" r="2.300" stroke="none"/><circle cx="11.200" cy="966.200" r="2.300" stroke="none"/><circle cx="20.300" cy="971.200" r="2.300" stroke="none"/></g>
<!-- chain -->
<rect x="85.600" y="958.600" width="7.800" height="7.800" rx="3.800" fill="#fff" stroke="#000" stroke-width="1.300"/>
<rect x="85.600" y="968" width="7.800" height="7.800" rx="3.800" fill="#fff" stroke="#000" stroke-width="1.300"/>
<path d="M87.700 967.300V962.600a1.800 1.800 0 0 1 3.600 0V967.300z" fill="#000"/><path d="M88.900 967.300V962.800a.6 .6 0 0 1 1.200 0V967.300z" fill="#fff"/>
<path d="M87.700 967.200V971.800a1.800 1.800 0 0 0 3.600 0V967.200z" fill="#000"/><path d="M88.900 967.200V971.600a.6 .6 0 0 0 1.200 0V967.200z" fill="#fff"/>
<rect x="86.300" y="966.500" width="6.400" height="1.400" fill="#a8c6d4"/>
<path d="M93.200 971.800h6.600l-3.300 3.400z" fill="#000" stroke="#fff" stroke-width=".7"/>
<!-- doc list icon -->
<rect x="111.700" y="959.700" width="11.800" height="13.600" fill="#fff" stroke="#000" stroke-width="1.500"/>
<path d="M113 961.900h4.800M113 964.800h7.600M115.300 967.600h6.800M118 970.500h4.200" stroke="#000" stroke-width="1.900"/>
<path d="M114.500 960.500l8.500 11" stroke="#fff" stroke-width=".9"/>
<path d="M118.300 960.400h5l-2.500 3z" fill="#f88"/><path d="M112.300 972.700l2.500-3.500 2.700 3.500z" fill="#3cd850"/>
<!-- volume by price -->
<rect x="138.5" y="959.5" width="8.0" height="3" fill="#48e048" stroke="#5a5a5a" stroke-width=".9"/><rect x="146.500" y="959.5" width="4.0" height="3" fill="#ff8c8c" stroke="#5a5a5a" stroke-width=".9"/><rect x="142" y="962.5" width="4.5" height="3" fill="#48e048" stroke="#5a5a5a" stroke-width=".9"/><rect x="146.500" y="962.5" width="7.0" height="3" fill="#ff8c8c" stroke="#5a5a5a" stroke-width=".9"/><rect x="139.5" y="965.5" width="7.0" height="3" fill="#48e048" stroke="#5a5a5a" stroke-width=".9"/><rect x="146.500" y="965.5" width="3.0" height="3" fill="#ff8c8c" stroke="#5a5a5a" stroke-width=".9"/><rect x="142.5" y="968.5" width="4.0" height="3" fill="#48e048" stroke="#5a5a5a" stroke-width=".9"/><rect x="146.500" y="968.5" width="7.0" height="3" fill="#ff8c8c" stroke="#5a5a5a" stroke-width=".9"/><rect x="138.5" y="971.5" width="8.0" height="3" fill="#48e048" stroke="#5a5a5a" stroke-width=".9"/><rect x="146.500" y="971.5" width="3.0" height="3" fill="#ff8c8c" stroke="#5a5a5a" stroke-width=".9"/>
<!-- scrollbar -->
<rect x="161.500" y="959.500" width="1000.500" height="15" rx="3" fill="#9cbac8" stroke="#7f98a5"/>
<rect x="161.500" y="959.500" width="15" height="15" rx="3" fill="url(#sbb)" stroke="#7f98a5"/>
<path d="M170.500 963.600v6.800l-3.700-3.400z" fill="#000"/>
<rect x="1147.500" y="959.500" width="14.500" height="15" rx="3" fill="url(#sbb)" stroke="#7f98a5"/>
<path d="M1153.700 963.600v6.800l3.700-3.400z" fill="#000"/>
<rect x="1116.500" y="959.500" width="7.500" height="15" rx="3.500" fill="url(#sbb)" stroke="#7f98a5"/>
<path d="M1117 965.200h6.500M1117 967.500h6.500M1117 969.800h6.500" stroke="#f0f8fc" stroke-width="1.100"/>
<!-- candle wrench -->
<path d="M1173.500 966v11M1181.500 957v20" stroke="#444" stroke-width="1"/>
<rect x="1171" y="968" width="5.500" height="7" fill="#f08080" stroke="#b05050" stroke-width=".6"/>
<rect x="1178.500" y="960" width="6.500" height="15" fill="#40c840" stroke="#208020" stroke-width=".6"/>
<use href="#iw" transform="translate(1171.500,962) scale(1.02)"/>
<!-- magnifiers -->
<path d="M1207 969l6.500 6.500" stroke="#000" stroke-width="2.800" stroke-linecap="round"/>
<circle cx="1203" cy="965" r="5.700" fill="url(#lens)" stroke="#666" stroke-width=".8"/>
<g stroke="#1414ff" stroke-width="1.200" fill="none"><path d="M1212.500 960v9.500M1210.500 962l2-2.200 2 2.200M1210.500 967.500l2 2.200 2-2.200"/><path d="M1196.500 974h8M1198.500 972l-2.200 2 2.200 2M1202.500 972l2.200 2-2.200 2"/></g>
<path d="M1235.500 969.500l6 6" stroke="#000" stroke-width="2.800" stroke-linecap="round"/>
<circle cx="1231" cy="965" r="5.300" fill="#fff" stroke="#000" stroke-width="1.500"/>
<path d="M1228 965h6" stroke="#1414ff" stroke-width="1.800"/>
<path d="M1263.500 969.500l6 6" stroke="#000" stroke-width="2.800" stroke-linecap="round"/>
<circle cx="1259" cy="965" r="5.300" fill="#fff" stroke="#000" stroke-width="1.500"/>
<path d="M1256 965h6M1259 962v6" stroke="#1414ff" stroke-width="1.800"/>
</svg>
<div class="t w" style="left:28px;top:960px;letter-spacing:-0.14px;/*a*/--x1:72">Condividi</div>

<div id="bl"><i></i></div><div id="br"></div><div id="bb"></div>
<div id="task"></div>
<!-- TASKBAR -->
<div class="abs" style="left:0;top:984px;width:48px;height:40px;background:#0b0b0b"></div>
<div class="abs" style="left:48px;top:984px;width:344px;height:40px;background:#f2f2f2"></div>
<div class="abs" style="left:737px;top:984px;width:44px;height:40px;background:#484848"></div>
<div class="abs" style="left:781px;top:984px;width:4px;height:40px;background:#3a3a3a"></div>
<div class="abs" style="left:692px;top:1022px;width:40px;height:2px;background:#76b9ed"></div>
<div class="abs" style="left:737px;top:1022px;width:48px;height:2px;background:#76b9ed"></div>
<svg id="tasksvg" style="left:0;top:984px" width="1280" height="40" viewBox="0 984 1280 40">
<!-- windows logo -->
<path d="M15.700 998.100l6.800-.95v6.600h-6.800zM23.300 997l9.200-1.300v8.050h-9.200zM15.700 1004.500h6.800v6.600l-6.800-.95zM23.300 1004.500h9.200v8.050l-9.200-1.300z" fill="#fff"/>
<circle cx="68" cy="1004.700" r="8.800" fill="none" stroke="#777" stroke-width="4.400" opacity=".3"/><circle cx="68" cy="1004.700" r="8.800" fill="none" stroke="#111" stroke-width="2.800"/>
<!-- mic -->
<g fill="none" stroke="#333" stroke-width="1.200"><rect x="369" y="996.200" width="5.600" height="10" rx="2.200"/><path d="M366.700 1003.500v1.500a5.100 5.100 0 0 0 10.200 0v-1.500M371.800 1010.200v2M369 1012.200h5.600"/></g>
<!-- task view -->
<g fill="none" stroke="#fff" stroke-width="1.300"><rect x="409.500" y="999" width="8.500" height="8.500"/><path d="M407.500 996.500h12.500M407.500 1010.500h12.500M422.800 996v3M422.800 1005v6.500"/></g><rect x="421.500" y="1000" width="2.600" height="3.600" fill="#fff"/>
<!-- edge -->
<path d="M457 1004.500c0-6.500 4.500-11 10.500-11 6 0 9.700 4.300 9.700 10v2.300h-13.800c.3 3 2.600 4.700 6 4.700 2.600 0 4.800-.7 6.800-2v4.500c-2 1.100-4.600 1.700-7.600 1.700-6.700 0-10.700-4-10.700-9.500 0-3.700 2-6.700 5.200-8.300-1.300 1.300-2 3.200-2.100 4.700h9.700c0-2.700-1.500-4.700-4.300-4.700-3.800 0-7.500 2.700-9.400 7.600z" fill="#0a80dc"/>
<!-- folder -->
<path d="M505 996.500a1.500 1.500 0 0 1 1.500-1.500h7l1.500 1.800h10a1.500 1.500 0 0 1 1.500 1.500v13.200a1.200 1.200 0 0 1-1.200 1.200h-19.100a1.200 1.200 0 0 1-1.200-1.200z" fill="#fde28a"/>
<path d="M505 996.500a1.500 1.500 0 0 1 1.500-1.500h7l1.500 1.800h-10z" fill="#f2c94c"/>
<rect x="506.500" y="995.800" width="5" height="1" fill="#fff" opacity=".8"/>
<path d="M509 1012.700v-6.200a1.500 1.500 0 0 1 1.500-1.500h10.500a1.500 1.500 0 0 1 1.500 1.500v6.200h-3.500v-4.500h-6.500v4.500z" fill="#3cb1f0"/>
<!-- store -->
<path d="M560.500 998.500v-2a4.300 4.300 0 0 1 8.600 0v2" fill="none" stroke="#fff" stroke-width="1.300"/>
<path d="M553 998h23.300v15.500a1.500 1.500 0 0 1-1.500 1.500h-20.300a1.500 1.500 0 0 1-1.500-1.500z" fill="#fff"/>
<rect x="559" y="1001.200" width="5" height="5" fill="#f25022"/><rect x="565" y="1001.200" width="5" height="5" fill="#7fba00"/><rect x="559" y="1007.200" width="5" height="5" fill="#00a4ef"/><rect x="565" y="1007.200" width="5" height="5" fill="#ffb900"/>
<!-- mail -->
<path d="M601.700 1001l12.300-7.300 12.300 7.300v12h-24.600z" fill="#fff"/>
<path d="M606 1001h16l-7.500 3.700 4.500 5.300-7-5.300z" fill="#1c1c1e"/>
<path d="M601.700 1001h24.600" stroke="#1c1c1e" stroke-width=".0"/>
<!-- IE -->
<path d="M653.500 1004.800c0-5.800 4.300-9.800 9.800-9.800 5.600 0 9.300 4 9.300 9.500v1.800h-13.200c.4 2.600 2.500 4 5.300 4 2.200 0 4.200-.6 6-1.700v4c-1.900 1-4.200 1.500-6.800 1.500-6.300 0-10.400-3.700-10.400-9.300zm5.900-1.800h7.600c-.2-2.500-1.500-4-3.700-4-2.200 0-3.600 1.500-3.900 4z" fill="#1eaaf1"/>
<path d="M672.500 996.500c2-2.800 1.500-4.500-1-4.300-4.500.3-13.500 6-17.500 13-2.800 5-2.200 8.300 1.300 7.500" fill="none" stroke="#f5c518" stroke-width="1.700"/>
<!-- chrome -->
<circle cx="712" cy="1004" r="11" fill="#db4437"/>
<path d="M712 1004L702.470 998.500A11 11 0 0 0 706.500 1013.530Z M706.500 1013.530A11 11 0 0 0 712 1015L717.500 1005.500L712 1004Z" fill="#0f9d58"/>
<path d="M702.470 998.500A11 11 0 0 0 706.500 1013.530L712 1004Z" fill="#0f9d58"/>
<path d="M712 1015A11 11 0 0 0 721.530 998.500H712L716.500 1006.500Z" fill="#ffcd40"/>
<path d="M706.500 1013.530L712 1004l4.760 2.750L712 1015a11 11 0 0 1-5.500-1.470z" fill="#0f9d58"/>
<circle cx="712" cy="1004" r="5.300" fill="#f1f1f1"/><circle cx="712" cy="1004" r="4.200" fill="#4285f4"/>
<!-- candles app -->
<path d="M755.500 999v16M766.500 992v24" stroke="#c03030" stroke-width="1"/><path d="M766.500 992v24" stroke="#20a020" stroke-width="1"/>
<rect x="751.500" y="1002.500" width="8" height="10" fill="#f07878" stroke="#c83c3c"/>
<rect x="762.500" y="996.500" width="8" height="14.500" fill="#50d850" stroke="#28a828"/>
<!-- tray -->
<g fill="none" stroke="#fff" stroke-width="1.200"><circle cx="1064.200" cy="998.800" r="2.900"/><path d="M1061.800 1002.900q2.400-1.500 4.600 0q1.300 1 1.600 2.600"/><circle cx="1058.100" cy="1005.200" r="2.700"/><path d="M1054 1011q.3-2.200 2.100-3.100M1062.200 1011q-.3-2.200-2.100-3.100"/></g>
<path d="M1091.500 1006.500l6-6 6 6" fill="none" stroke="#fff" stroke-width="1.300"/>
<g fill="none" stroke="#9a9a9a" stroke-width="1.200"><path d="M1117 1010.500a11 11 0 0 1 11-11M1120.300 1010.500a7.700 7.700 0 0 1 7.700-7.700M1123.600 1010.500a4.400 4.400 0 0 1 4.400-4.400"/></g><circle cx="1127" cy="1009.800" r="1.500" fill="#fff"/>
<g fill="none" stroke="#fff" stroke-width="1.200"><path d="M1137.500 1002.500h2.800l3.700-3.500v11.500l-3.700-3.500h-2.800z"/><path d="M1146.200 1002a3.800 3.800 0 0 1 0 5.500M1148.500 1000a6.800 6.800 0 0 1 0 9.500M1150.800 998a9.800 9.800 0 0 1 0 13.500"/></g>
<!-- notification -->
<path d="M1239.500 996.500h15v10.500h-9l-3 3v-3h-3z" fill="#fff"/><path d="M1242 999.500h10M1242 1002h10M1242 1004.500h6" stroke="#111" stroke-width="1"/>
<circle cx="1254.500" cy="1011" r="6.700" fill="#2b2b2b" stroke="#7a7a7a" stroke-width="1.300"/>
<rect x="1275" y="984" width="1" height="40" fill="#4a4a4a"/>
</svg>
<div class="t" style="left:88px;top:995.500px;font-size:15px;line-height:18px;color:#2b2b2b;letter-spacing:-0.10px;/*a*/--x1:298">Scrivi qui per eseguire la ricerca</div>
<div class="t w" style="left:1178.500px;top:988px;font-size:12px;line-height:14px;letter-spacing:-0.41px;/*a*/--x1:1206.500">14:10</div>
<div class="t w" style="left:1162.500px;top:1006px;font-size:12px;line-height:14px;letter-spacing:0.03px;/*a*/--x1:1222">01/11/2018</div>
<div class="t w b" style="left:1251.500px;top:1005px;font-size:10px;line-height:12px">2</div>

</body>
</html>
